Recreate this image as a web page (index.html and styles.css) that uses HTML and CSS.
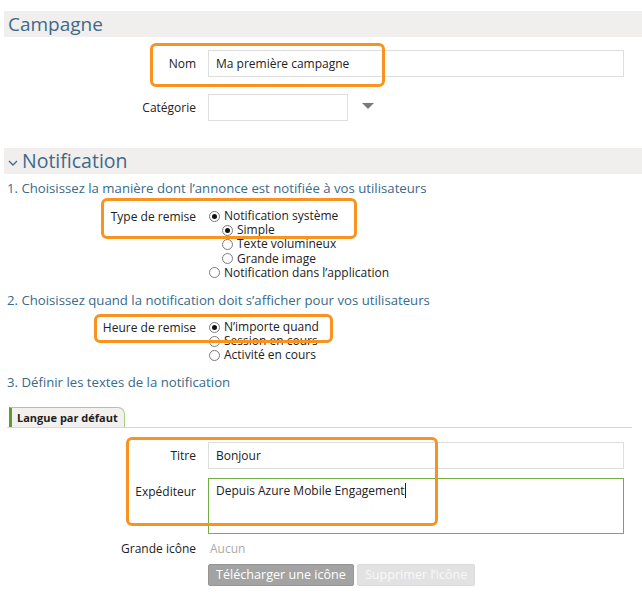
FILE: index.html
```html
<!DOCTYPE html>
<html lang="fr">
<head>
<meta charset="utf-8">
<link rel="stylesheet" href="styles.css">
</head>
<body>
<div class="page">
  <div class="sec-head">Campagne</div>
  <div class="row row-nom">
    <div class="lbl">Nom</div>
    <div class="input">Ma première campagne</div>
  </div>
  <div class="row row-cat">
    <div class="lbl">Catégorie</div>
    <div class="select-wrap">
      <div class="select"></div>
      <svg class="arrow" width="12" height="6" viewBox="0 0 12 6"><polygon points="0,0 12,0 6,6" fill="#7a7a7a"/></svg>
    </div>
  </div>

  <div class="sec-head sec-notif">
    <svg class="chev" width="10" height="6" viewBox="0 0 10 6"><polyline points="1,1 5,5 9,1" fill="none" stroke="#41698a" stroke-width="1.3"/></svg>
    <span>Notification</span>
  </div>
  <div class="step step1">1. Choisissez la manière dont l’annonce est notifiée à vos utilisateurs</div>
  <div class="row row-radios row-type">
    <div class="lbl">Type de remise</div>
    <div class="radios">
      <div class="opt"><span class="radio on"></span>Notification système</div>
      <div class="sub">
        <div class="opt"><span class="radio on"></span>Simple</div>
        <div class="opt"><span class="radio"></span>Texte volumineux</div>
        <div class="opt"><span class="radio"></span>Grande image</div>
      </div>
      <div class="opt"><span class="radio"></span>Notification dans l’application</div>
    </div>
  </div>
  <div class="step step2">2. Choisissez quand la notification doit s’afficher pour vos utilisateurs</div>
  <div class="row row-radios row-heure">
    <div class="lbl">Heure de remise</div>
    <div class="radios">
      <div class="opt"><span class="radio on"></span>N’importe quand</div>
      <div class="opt"><span class="radio"></span>Session en cours</div>
      <div class="opt"><span class="radio"></span>Activité en cours</div>
    </div>
  </div>
  <div class="step step3">3. Définir les textes de la notification</div>
  <div class="tabs">
    <div class="tab">Langue par défaut</div>
  </div>
  <div class="row row-titre">
    <div class="lbl">Titre</div>
    <div class="input">Bonjour</div>
  </div>
  <div class="row row-exp">
    <div class="lbl">Expéditeur</div>
    <div class="input textarea">Depuis Azure Mobile Engagement<span class="caret"></span></div>
  </div>
  <div class="row row-icon">
    <div class="lbl">Grande icône</div>
    <div class="none">Aucun</div>
  </div>
  <div class="row row-btns">
    <div></div>
    <div class="btns">
      <span class="btn btn-dark">Télécharger une icône</span>
      <span class="btn btn-light">Supprimer l’icône</span>
    </div>
  </div>

  <div class="mark mark1"></div>
  <div class="mark mark2"></div>
  <div class="mark mark3"></div>
  <div class="mark mark4"></div>
</div>
</body>
</html>
```
FILE: styles.css
```css
* { box-sizing: border-box; }
html, body { margin: 0; padding: 0; background: #fff; }
body {
  font-family: "Open Sans", "Noto Sans", sans-serif;
  font-size: 12px;
  color: #222;
}
.page {
  position: relative;
  width: 642px;
  height: 607px;
  padding-top: 11px;
}
.sec-head {
  margin-left: 4px;
  height: 26px;
  background: #f0efee;
  color: #41698a;
  font-size: 19px;
  line-height: 26px;
  padding-left: 4px;
}
.sec-notif {
  margin-top: 27px;
  display: flex;
  align-items: center;
  font-size: 19.5px;
  padding-left: 4px;
}
.sec-notif .chev { margin-right: 4px; margin-top: 3px; }
.row {
  display: grid;
  grid-template-columns: 196px 416px;
  column-gap: 12px;
  align-items: start;
}
.lbl {
  text-align: right;
  line-height: 27px;
}
.input {
  height: 27px;
  border: 1px solid #dedede;
  padding-left: 7px;
  line-height: 25px;
  background: #fff;
}
.row-nom { margin-top: 13px; }
.row-cat { margin-top: 17px; }
.select-wrap { display: flex; align-items: center; }
.select {
  width: 140px;
  height: 27px;
  border: 1px solid #dedede;
}
.arrow { margin-left: 14px; margin-top: -4px; }
.step {
  color: #386a8c;
  font-size: 13.2px;
  margin-left: 7px;
  line-height: 18px;
}
.step1 { margin-top: 5px; }
.row-radios .lbl { line-height: 15px; padding-top: 0; }
.row-type { margin-top: 12px; }
.radios { margin-left: 1px; }
.opt {
  display: flex;
  align-items: center;
  height: 14.2px;
  line-height: 14px;
  white-space: nowrap;
}
.sub { margin-left: 13px; }
.radio {
  width: 11px;
  height: 11px;
  border: 1px solid #7b7b7b;
  border-radius: 50%;
  margin-right: 4px;
  flex: none;
  position: relative;
  background: #fff;
}
.radio.on::after {
  content: "";
  position: absolute;
  left: 2px;
  top: 2px;
  width: 5px;
  height: 5px;
  border-radius: 50%;
  background: #111;
}
.step2 { margin-top: 11px; }
.row-heure { margin-top: 11px; }
.step3 { margin-top: 10px; }
.tabs {
  margin: 16px 10px 0 7px;
  border-bottom: 1px solid #d8d8d8;
  height: 21px;
  display: flex;
}
.tab {
  margin-left: 2px;
  height: 20px;
  padding: 0 6px 0 5px;
  background: #f2f1ef;
  border-left: 3px solid #5f9b32;
  border-top: 1px solid #a6cf82;
  border-right: 1px solid #a6cf82;
  border-top-right-radius: 7px;
  font-weight: bold;
  font-size: 11px;
  line-height: 19px;
  color: #1e1e1e;
}
.row-titre { margin-top: 14px; }
.row-exp { margin-top: 9px; }
.textarea {
  height: 56px;
  border-color: #76b043;
  line-height: 23px;
}
.caret {
  display: inline-block;
  width: 1px;
  height: 15px;
  background: #222;
  vertical-align: -3px;
}
.row-icon { margin-top: 6px; }
.row-icon .lbl, .none { line-height: 18px; }
.none { color: #aaa; padding-left: 2px; }
.row-btns { margin-top: 6px; }
.btns { display: flex; gap: 3px; }
.btn {
  height: 22px;
  line-height: 20px;
  padding: 0 7px;
  border-radius: 2px;
  color: #fff;
  font-size: 12.6px;
}
.btn-dark { background: #a3a3a3; border: 1px solid #959595; }
.btn-light { background: #e2e2e2; border: 1px solid #dadada; color: #f8f8f8; }

.mark {
  position: absolute;
  border: 3px solid #f7931e;
  border-radius: 6px;
  pointer-events: none;
}
.mark1 { left: 150px; top: 43px; width: 235px; height: 44px; }
.mark2 { left: 101px; top: 198px; width: 256px; height: 41px; }
.mark3 { left: 94px; top: 314px; width: 239px; height: 29px; }
.mark4 { left: 126px; top: 437px; width: 312px; height: 89px; }
```
